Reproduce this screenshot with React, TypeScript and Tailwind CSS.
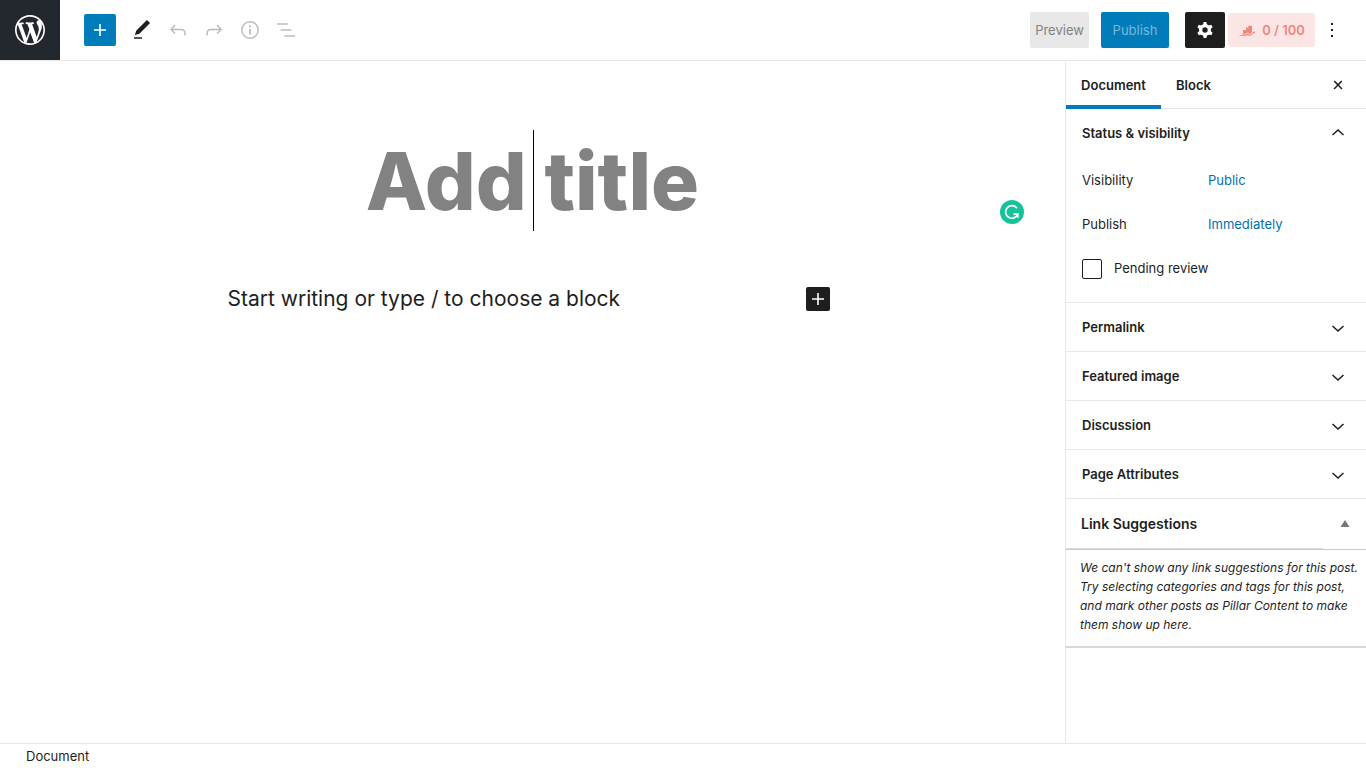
import type { ReactNode } from "react";

function Icon({ d, className = "size-6" }: { d: string; className?: string }) {
  return (
    <svg viewBox="0 0 24 24" className={className} fill="currentColor" aria-hidden="true">
      <path d={d} />
    </svg>
  );
}

const PLUS = "M18 11.2h-5.2V6h-1.6v5.2H6v1.6h5.2V18h1.6v-5.2H18z";
const EDIT = "M20.1 5.1L16.9 2 6.2 12.7l-1.3 4.4 4.5-1.3L20.1 5.1zM4 20.8h8v-1.5H4v1.5z";
const UNDO =
  "M18.3 11.7c-.6-.6-1.4-.9-2.3-.9H6.7l2.9-3.3-1.1-1-4.5 5L8.5 16l1-1-2.7-2.7H16c.5 0 .9.2 1.3.5 1 1 1 3.4 1 4.5v.3h1.5v-.2c0-1.5 0-4.3-1.5-5.7z";
const REDO =
  "M15.6 6.5l-1.1 1 2.9 3.3H8c-.9 0-1.7.3-2.3.9-1.4 1.5-1.4 4.2-1.4 5.6v.2h1.5v-.3c0-1.1 0-3.5 1-4.5.3-.3.7-.5 1.3-.5h9.2L14.5 15l1.1 1.1 4.6-4.6-4.6-5z";
const OUTLINE = "M13.8 5.2H3v1.5h10.8V5.2zm-3.6 12v1.5H21v-1.5H10.2zm7.2-6H6.6v1.5h10.8v-1.5z";
const CLOSE = "M13 11.9l3.3-3.4-1.1-1-3.2 3.3-3.2-3.3-1.1 1 3.3 3.4-3.5 3.6 1 1L12 13l3.5 3.5 1-1z";
const UP = "M12 8l-6 5.4 1 1.1 5-4.6 5 4.6 1-1.1z";
const DOWN = "M17 9.4L12 14 7 9.4l-1 1.2 6 5.4 6-5.4z";
const MORE = "M11 5h2v2h-2zM11 11h2v2h-2zM11 17h2v2h-2z";
const WORDPRESS =
  "M20 10c0-5.51-4.49-10-10-10C4.48 0 0 4.49 0 10c0 5.52 4.48 10 10 10 5.51 0 10-4.48 10-10zM7.78 15.37L4.37 6.22c.55-.02 1.17-.08 1.17-.08.5-.06.44-1.13-.06-1.11 0 0-1.45.11-2.37.11-.18 0-.37 0-.58-.01C4.12 2.69 6.87 1.11 10 1.11c2.33 0 4.45.87 6.05 2.34-.68-.11-1.65.39-1.65 1.58 0 .74.45 1.36.9 2.1.35.61.55 1.36.55 2.46 0 1.49-1.4 5-1.4 5l-3.03-8.37c.54-.02.82-.17.82-.17.5-.05.44-1.25-.06-1.22 0 0-1.44.12-2.38.12-.87 0-2.33-.12-2.33-.12-.5-.03-.56 1.2-.06 1.22l.92.08 1.26 3.41zM17.41 10c.24-.64.74-1.87.43-4.25.7 1.29 1.05 2.71 1.05 4.25 0 3.29-1.73 6.24-4.4 7.78.97-2.59 1.94-5.2 2.92-7.78zM6.1 18.09C3.12 16.65 1.11 13.53 1.11 10c0-1.3.23-2.48.72-3.59C3.25 10.3 4.67 14.2 6.1 18.09zm4.03-6.63l2.58 6.98c-.86.29-1.76.45-2.71.45-.79 0-1.57-.11-2.29-.33.81-2.38 1.62-4.74 2.42-7.1z";
const COG_TEETH = "M10.7 4h2.6l.9 4H9.8zM10.7 20h2.6l.9-4H9.8z";

function Tool({ label, children, disabled }: { label: string; children: ReactNode; disabled?: boolean }) {
  return (
    <button type="button" aria-label={label} disabled={disabled} className="flex size-9 items-center justify-center disabled:text-[#bcbcbc]">
      {children}
    </button>
  );
}

function Header() {
  return (
    <header className="flex h-[61px] shrink-0 items-center justify-between border-b border-[#e8e8e8]">
      <div className="flex items-center">
        <a href="#dashboard" aria-label="View pages" className="flex size-15 items-center justify-center bg-[#23282e] text-white">
          <svg viewBox="-2 -2 24 24" className="size-9" fill="currentColor" aria-hidden="true">
            <path d={WORDPRESS} />
          </svg>
        </a>
        <div className="ml-6 flex items-center">
          <button type="button" aria-label="Add block" className="mr-2 flex size-8 items-center justify-center rounded-xs bg-[#007cba] text-white">
            <Icon d={PLUS} />
          </button>
          <Tool label="Modes">
            <Icon d={EDIT} />
          </Tool>
          <Tool label="Undo" disabled>
            <Icon d={UNDO} />
          </Tool>
          <Tool label="Redo" disabled>
            <Icon d={REDO} />
          </Tool>
          <Tool label="Content structure" disabled>
            <svg viewBox="0 0 24 24" className="size-6" fill="none" stroke="currentColor" strokeWidth="1.5" aria-hidden="true">
              <circle cx="12" cy="12" r="8.2" />
              <path d="M12 11v5.5M12 7.5v2" strokeWidth="1.8" />
            </svg>
          </Tool>
          <Tool label="Block navigation" disabled>
            <Icon d={OUTLINE} />
          </Tool>
        </div>
      </div>
      <div className="flex items-center pr-[22px] text-[13px]">
        <button type="button" className="mr-3 h-9 w-[59px] rounded-xs bg-[#e8e8e8] pt-0.5 text-[#828282]">Preview</button>
        <button type="button" className="mr-4 h-9 w-17 rounded-xs bg-[#007cba] pt-0.5 text-[#7db6d8]">Publish</button>
        <button type="button" aria-label="Settings" className="mr-[3px] flex h-9 w-10 items-center justify-center rounded-xs bg-[#1e1e1e] text-white">
          <svg viewBox="0 0 24 24" className="size-6" fill="currentColor" aria-hidden="true">
            <circle cx="12" cy="12" r="6" />
            <path d={COG_TEETH} />
            <path d={COG_TEETH} transform="rotate(60 12 12)" />
            <path d={COG_TEETH} transform="rotate(120 12 12)" />
            <circle cx="12" cy="12" r="2.7" fill="#1e1e1e" />
          </svg>
        </button>
        <button type="button" className="flex h-[34px] w-[87px] items-center justify-center gap-1.5 rounded-[3px] bg-[#fce6e5] pt-0.5 font-semibold text-[#f1877e]">
          <svg viewBox="0 0 18 12" className="h-3 w-[18px]" fill="currentColor" aria-hidden="true">
            <path d="M5 5h3V2.500h2.300V.8H14v6.700L11.500 9 9.800 7.600 6.500 9.500 5 8.500z" />
            <path d="M.8 10.800C3 10.600 4.600 9.600 5.200 9l1.500.9 3.200-1.700 1.800 1.500 3.500-2-.5-.8 2.600-.3-1 2.200-.5-.6-3.900 2.900-2.200-1.200-3.200 1.400-1.600-.9C3.700 11.200 2.200 11.300.8 10.800z" />
          </svg>
          0 / 100
        </button>
        <button type="button" aria-label="More tools" className="ml-[5px] flex h-9 w-6 items-center justify-center">
          <Icon d={MORE} />
        </button>
      </div>
    </header>
  );
}

function Editor() {
  return (
    <main className="relative min-w-0 flex-1 px-6">
      <div className="relative mt-[69px]">
        <input
          type="text"
          aria-label="Add title"
          placeholder="Add title"
          className="block h-[101px] w-full text-center text-[80px] leading-[101px] font-extrabold outline-none placeholder:text-[#828282]"
        />
        <span aria-hidden="true" className="absolute top-0 left-1/2 h-[101px] w-px bg-black" />
      </div>
      <div className="mx-auto mt-[52px] flex max-w-[610px] items-center pr-2">
        <input
          type="text"
          aria-label="Block content"
          placeholder="Start writing or type / to choose a block"
          className="h-8 min-w-0 flex-1 pb-0.5 text-[21px] outline-none placeholder:text-[#1e1e1e]"
        />
        <button type="button" aria-label="Add block" className="flex size-6 items-center justify-center rounded-xs bg-[#1e1e1e] text-white">
          <Icon d={PLUS} />
        </button>
      </div>
      <button type="button" aria-label="Grammarly" className="absolute top-[139px] right-[41px] size-6">
        <svg viewBox="0 0 24 24" className="size-6" fill="none" aria-hidden="true">
          <circle cx="12" cy="12" r="12" fill="#15c39a" />
          <path d="M17 8.200A6.300 6.300 0 1 0 17.800 14.200H13.500M17.900 13.500V17.800" stroke="#fff" strokeWidth="1.700" />
        </svg>
      </button>
    </main>
  );
}

function Panel({ title }: { title: string }) {
  return (
    <h2 className="border-b border-[#e8e8e8]">
      <button type="button" aria-expanded="false" className="flex h-12 w-full items-center justify-between px-4 pt-0.5 text-left font-semibold">
        {title}
        <Icon d={DOWN} />
      </button>
    </h2>
  );
}

function Sidebar() {
  return (
    <aside className="w-[301px] shrink-0 border-l border-[#e8e8e8]">
      <div className="flex h-12 items-stretch border-b border-[#e8e8e8] font-semibold">
        <button type="button" className="-mb-px w-[95px] border-b-4 border-[#007cba] pt-1.5">Document</button>
        <button type="button" className="px-[15px] pt-0.5">Block</button>
        <button type="button" aria-label="Close settings" className="mr-4 ml-auto">
          <Icon d={CLOSE} />
        </button>
      </div>
      <section className="border-b border-[#e8e8e8] pb-[15px]">
        <h2>
          <button type="button" aria-expanded="true" className="flex h-12 w-full items-center justify-between px-4 text-left font-semibold">
            <span className="pt-0.5">Status &amp; visibility</span>
            <Icon d={UP} />
          </button>
        </h2>
        <div className="flex flex-col gap-2 px-4 pt-1.5">
          <div className="flex h-9 items-center">
            <span className="w-[126px]">Visibility</span>
            <button type="button" className="text-[#0073b1]">Public</button>
          </div>
          <div className="flex h-9 items-center">
            <span className="w-[126px]">Publish</span>
            <button type="button" className="text-[#0073b1]">Immediately</button>
          </div>
          <label className="flex h-9 items-center gap-3">
            <input type="checkbox" className="size-5 appearance-none rounded-xs border border-[#1e1e1e]" />
            Pending review
          </label>
        </div>
      </section>
      <Panel title="Permalink" />
      <Panel title="Featured image" />
      <Panel title="Discussion" />
      <Panel title="Page Attributes" />
      <section className="border-b-2 border-[#d8d8d8]">
        <h2 className="flex h-[51px] items-center justify-between border-b border-[#c6c9cc] text-sm font-semibold">
          <span className="flex h-full w-64 items-center border-b border-[#dcdcdc] pl-[15px]">Link Suggestions</span>
          <button type="button" aria-label="Toggle panel" className="mr-4">
            <svg viewBox="0 0 10 8" className="h-2 w-2.5" fill="#72777c" aria-hidden="true">
              <path d="M5 0l4.500 7H.5z" />
            </svg>
          </button>
        </h2>
        <p className="pt-2 pr-2 pb-3 pl-3.5 text-[12px] leading-[19px] italic">
          We can't show any link suggestions for this post. Try selecting categories and tags for this post, and mark other posts as Pillar Content to make them show up here.
        </p>
      </section>
    </aside>
  );
}

export default function App() {
  return (
    <div className="flex min-h-screen flex-col bg-white font-['Inter',sans-serif] text-[13px] text-[#1e1e1e]">
      <Header />
      <div className="flex flex-1">
        <Editor />
        <Sidebar />
      </div>
      <footer className="flex h-[25px] items-center border-t border-[#e8e8e8] pt-0.5 pl-[26px]">Document</footer>
    </div>
  );
}
